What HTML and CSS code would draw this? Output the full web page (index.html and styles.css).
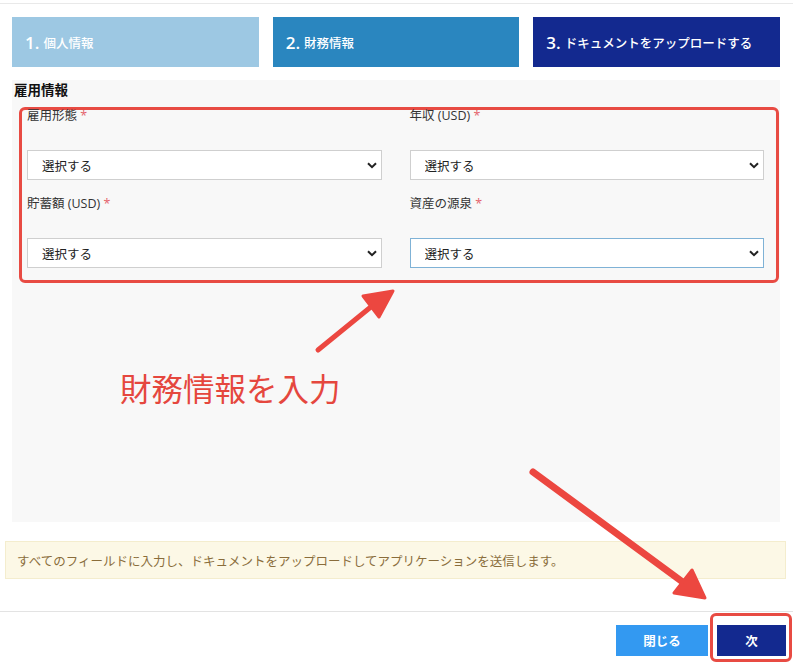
FILE: index.html
```html
<!DOCTYPE html>
<html lang="ja">
<head>
  <meta charset="UTF-8" />
  <title>財務情報</title>
  <link rel="stylesheet" href="styles.css">
</head>
<body>
  <div class="topline"></div>

  <!-- step tabs -->
  <div class="steps">
    <div class="step done"><span class="num">1.</span> 個人情報</div>
    <div class="step current"><span class="num">2.</span> 財務情報</div>
    <div class="step next"><span class="num">3.</span> ドキュメントをアップロードする</div>
  </div>

  <div class="panel">
    <h3>雇用情報</h3>
    <div class="fields">
      <div class="field">
        <label>雇用形態 <span class="req">*</span></label>
        <div class="select-wrap">
          <select><option>選択する</option></select>
          <svg class="chev" width="10" height="7" viewBox="0 0 10 7"><path d="M1 1.2 5 5.2 9 1.2" fill="none" stroke="#222" stroke-width="2"/></svg>
        </div>
      </div>
      <div class="field">
        <label>年収 (USD) <span class="req">*</span></label>
        <div class="select-wrap">
          <select><option>選択する</option></select>
          <svg class="chev" width="10" height="7" viewBox="0 0 10 7"><path d="M1 1.2 5 5.2 9 1.2" fill="none" stroke="#222" stroke-width="2"/></svg>
        </div>
      </div>
      <div class="field">
        <label>貯蓄額 (USD) <span class="req">*</span></label>
        <div class="select-wrap">
          <select><option>選択する</option></select>
          <svg class="chev" width="10" height="7" viewBox="0 0 10 7"><path d="M1 1.2 5 5.2 9 1.2" fill="none" stroke="#222" stroke-width="2"/></svg>
        </div>
      </div>
      <div class="field">
        <label>資産の源泉 <span class="req">*</span></label>
        <div class="select-wrap">
          <select class="focused"><option>選択する</option></select>
          <svg class="chev" width="10" height="7" viewBox="0 0 10 7"><path d="M1 1.2 5 5.2 9 1.2" fill="none" stroke="#222" stroke-width="2"/></svg>
        </div>
      </div>
    </div>
  </div>

  <div class="alert">すべてのフィールドに入力し、ドキュメントをアップロードしてアプリケーションを送信します。</div>

  <div class="footer">
    <button class="btn close">閉じる</button>
    <button class="btn primary">次</button>
  </div>

  <!-- annotations drawn on top of the screenshot -->
  <div class="note">財務情報を入力</div>
  <div class="mark"></div>
  <svg class="arrows" width="793" height="665" viewBox="0 0 793 665">
    <line x1="318" y1="350" x2="372" y2="306" stroke="#ec4740" stroke-width="5" stroke-linecap="round"/>
    <polygon points="393,291 363,296 379,317" fill="#ec4740" stroke="#ec4740" stroke-width="3" stroke-linejoin="round"/>
    <line x1="533" y1="472" x2="684" y2="583" stroke="#ec4740" stroke-width="7" stroke-linecap="round"/>
    <polygon points="705,598 674,593 692,570" fill="#ec4740" stroke="#ec4740" stroke-width="3" stroke-linejoin="round"/>
  </svg>
</body>
</html>
```
FILE: styles.css
```css
body {
  margin: 0;
  font-family: "Open Sans", "Noto Sans CJK JP", sans-serif;
  color: #333;
  background: #fff;
  width: 793px;
  height: 665px;
  position: relative;
  overflow: hidden;
}

.topline {
  height: 3px;
  border-bottom: 1px solid #e9e9e9;
}

.steps {
  display: grid;
  grid-template-columns: 1fr 1fr 1fr;
  gap: 14px;
  margin: 13px 13px 0 12px;
}

.step {
  height: 50px;
  display: flex;
  align-items: center;
  padding-left: 13px;
  color: #fff;
  font-family: "Noto Sans CJK JP", sans-serif;
  font-size: 12.5px;
  font-weight: 500;
}

.step .num {
  font-family: "Open Sans", sans-serif;
  font-size: 17px;
  font-weight: 600;
  margin-right: 4px;
}

.step.done { background: #9dc8e3; }
.step.current { background: #2a86bf; }
.step.next { background: #13298f; }

.panel {
  box-sizing: border-box;
  height: 442px;
  margin: 13px 13px 0 12px;
  padding: 0 1px 0 2px;
  background: #f8f8f8;
}

.panel h3 {
  margin: 0;
  font-family: "Noto Sans CJK JP", sans-serif;
  font-size: 13.5px;
  font-weight: 700;
  line-height: 18px;
  color: #111;
}

.fields {
  display: grid;
  grid-template-columns: 1fr 1fr;
  column-gap: 28px;
  row-gap: 18px;
  margin: 9px 0 0 5px;
  padding: 0 12px 12px 5px;
  border: 3px solid #e84b43;
  border-radius: 6px;
}

.field label {
  display: block;
  font-size: 12.5px;
  line-height: 12px;
  margin-bottom: 28px;
  color: #333;
}

.req {
  color: #e4626c;
}

.select-wrap {
  position: relative;
}

select {
  appearance: none;
  width: 100%;
  height: 30px;
  box-sizing: border-box;
  padding: 0 0 0 14px;
  border: 1px solid #cfcfcf;
  border-radius: 0;
  background: #fff;
  font-family: "Noto Sans CJK JP", sans-serif;
  font-size: 12.5px;
  color: #222;
}

select.focused {
  border-color: #7fb2d6;
}

.chev {
  position: absolute;
  right: 5px;
  top: 12px;
}

.alert {
  margin: 19px 7px 0 5px;
  height: 38px;
  box-sizing: border-box;
  padding-left: 11px;
  display: flex;
  align-items: center;
  background: #fcf8e6;
  border: 1px solid #f4edce;
  color: #8a6d3b;
  font-family: "Noto Sans CJK JP", sans-serif;
  font-size: 12.5px;
}

.footer {
  margin-top: 32px;
  border-top: 1px solid #e3e3e3;
  display: flex;
  justify-content: flex-end;
  gap: 9px;
  padding: 13px 7px 0 0;
}

.btn {
  height: 31px;
  border: none;
  color: #fff;
  font-family: "Noto Sans CJK JP", sans-serif;
  font-size: 12.5px;
  font-weight: 700;
}

.btn.close {
  width: 92px;
  background: #3399f1;
}

.btn.primary {
  width: 69px;
  background: #13298f;
}

.note {
  position: absolute;
  left: 120px;
  top: 364px;
  font-family: "Noto Sans CJK JP", sans-serif;
  font-size: 31.5px;
  line-height: 46px;
  color: #e5473e;
}

.mark {
  position: absolute;
  left: 710px;
  top: 613px;
  width: 82px;
  height: 49px;
  box-sizing: border-box;
  border: 3px solid #e84b43;
  border-radius: 6px;
}

.arrows {
  position: absolute;
  left: 0;
  top: 0;
  pointer-events: none;
}
```
